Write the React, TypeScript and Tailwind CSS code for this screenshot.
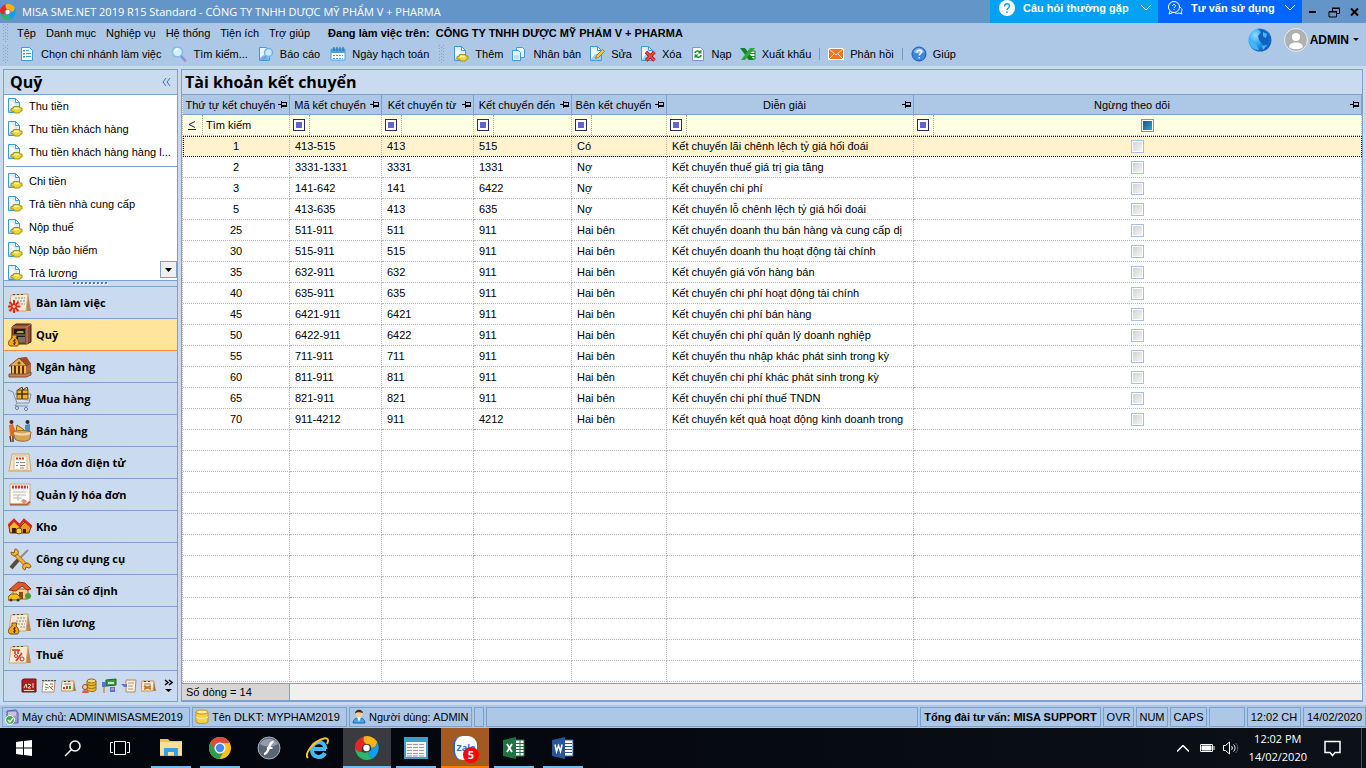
import { FC, ReactNode, useState } from "react"
import { clsx } from "clsx"

// Types
type AccountRow = {
  order: number
  code: string
  from: string
  to: string
  side: string
  note: string
}

const rows: AccountRow[] = [
  { order: 1, code: "413-515", from: "413", to: "515", side: "Có", note: "Kết chuyển lãi chênh lệch tỷ giá hối đoái" },
  { order: 2, code: "3331-1331", from: "3331", to: "1331", side: "Nợ", note: "Kết chuyển thuế giá trị gia tăng" },
  { order: 3, code: "141-642", from: "141", to: "6422", side: "Nợ", note: "Kết chuyển chi phí" },
  { order: 5, code: "413-635", from: "413", to: "635", side: "Nợ", note: "Kết chuyển lỗ chênh lệch tỷ giá hối đoái" },
  { order: 25, code: "511-911", from: "511", to: "911", side: "Hai bên", note: "Kết chuyển doanh thu bán hàng và cung cấp dị" },
  { order: 30, code: "515-911", from: "515", to: "911", side: "Hai bên", note: "Kết chuyển doanh thu hoạt động tài chính" },
  { order: 35, code: "632-911", from: "632", to: "911", side: "Hai bên", note: "Kết chuyển giá vốn hàng bán" },
  { order: 40, code: "635-911", from: "635", to: "911", side: "Hai bên", note: "Kết chuyển chi phí hoạt động tài chính" },
  { order: 45, code: "6421-911", from: "6421", to: "911", side: "Hai bên", note: "Kết chuyển chi phí bán hàng" },
  { order: 50, code: "6422-911", from: "6422", to: "911", side: "Hai bên", note: "Kết chuyển chi phí quản lý doanh nghiệp" },
  { order: 55, code: "711-911", from: "711", to: "911", side: "Hai bên", note: "Kết chuyển thu nhập khác phát sinh trong kỳ" },
  { order: 60, code: "811-911", from: "811", to: "911", side: "Hai bên", note: "Kết chuyển chi phí khác phát sinh trong kỳ" },
  { order: 65, code: "821-911", from: "821", to: "911", side: "Hai bên", note: "Kết chuyển chi phí thuế TNDN" },
  { order: 70, code: "911-4212", from: "911", to: "4212", side: "Hai bên", note: "Kết chuyển kết quả hoạt động kinh doanh trong" },
]

const columns = ["Thứ tự kết chuyển", "Mã kết chuyển", "Kết chuyển từ", "Kết chuyển đến", "Bên kết chuyển", "Diễn giải", "Ngừng theo dõi"]

const menus = ["Tệp", "Danh mục", "Nghiệp vụ", "Hệ thống", "Tiện ích", "Trợ giúp"]

// Small toolbar icons, all on a 16px grid
const Svg16: FC<{ children: ReactNode }> = ({ children }) => (
  <svg viewBox="0 0 16 16" className="h-4 w-4 shrink-0" fill="none">{children}</svg>
)

const Page: FC = () => (
  <>
    <path d="M1.5 .5h7l4 4v10h-11z" fill="#d9edfb" stroke="#3c9bdc" />
    <path d="M4 3l3 2 1 4-4 4H2.500V3z" fill="#fff" />
    <path d="M2 13l4-5h6v6H2z" fill="#9dd0f3" />
    <path d="M8.500 .5v4h4z" fill="#fff" stroke="#3c9bdc" strokeLinejoin="round" />
  </>
)

const DocCoinIcon: FC = () => (
  <Svg16>
    <Page />
    <path d="M7 8.500h5l1 1.500h2v3h-1.500l-1 2h-5l-1-2H4v-2.500h2z" fill="#ecd733" stroke="#a79416" />
    <path d="M7 10.500h5" stroke="#fbf6a6" strokeWidth="1.500" />
  </Svg16>
)

const BranchIcon: FC = () => (
  <Svg16>
    <path d="M2.500 1.500h8l3 3v10h-11z" fill="#f4faff" stroke="#3c9bdc" />
    <path d="M4 4h2v1.500H4zM4 7h2v1.500H4zM4 10h2v1.500H4zM7 4h3v1H7zM7 7h5v1H7zM7 10h5v1H7z" fill="#3c9bdc" />
  </Svg16>
)

const SearchIcon: FC = () => (
  <Svg16>
    <path d="M10 10l4 4.500" stroke="#8f8fd0" strokeWidth="2.500" strokeLinecap="round" />
    <circle cx="6.500" cy="6" r="5" fill="#d3f1fd" stroke="#78bfe9" strokeWidth="1.500" />
    <path d="M3.500 5.500c.5-2 2-2.500 3.500-2.500" stroke="#fff" strokeWidth="1.500" />
  </Svg16>
)

const ReportIcon: FC = () => (
  <Svg16>
    <path d="M1.500 1.500h7l3 3v10h-10z" fill="#e9f5fd" stroke="#3c9bdc" />
    <path d="M2 12l4-3 5 3v2H2z" fill="#6bb9ee" />
    <path d="M8 10l-3 4" stroke="#8f8fd0" strokeWidth="2" />
    <circle cx="10.500" cy="6.500" r="4" fill="#c8e8fa" stroke="#78aedd" strokeWidth="1.500" />
  </Svg16>
)

const CalendarIcon: FC = () => (
  <Svg16>
    <path d="M1 3h14v11H1z" fill="#fff" stroke="#4aa3df" />
    <path d="M1 3h14v4H1z" fill="#4aa3df" />
    <path d="M4 1v4M7 1v4M10 1v4M13 1v4" stroke="#265f94" />
    <path d="M3 9.500h10M3 12.500h10" stroke="#4aa3df" strokeDasharray="2 1" />
  </Svg16>
)

const CopyIcon: FC = () => (
  <Svg16>
    <path d="M5.500 1.500h6l2 2v8h-8z" fill="#e9f5fd" stroke="#3c9bdc" />
    <path d="M1.500 4.500h6l2 2v8h-8z" fill="#e9f5fd" stroke="#3c9bdc" />
    <path d="M3 9h5v4H3z" fill="#bfe0f7" />
  </Svg16>
)

const EditIcon: FC = () => (
  <Svg16>
    <Page />
    <path d="M6.500 12.500l1-3 6-6 2 2-6 6z" fill="#f7c53a" stroke="#a87b1c" />
  </Svg16>
)

const DeleteIcon: FC = () => (
  <Svg16>
    <Page />
    <path d="M6 6l8.500 8.500M14.500 6L6 14.500" stroke="#a51414" strokeWidth="3.500" />
    <path d="M6 6l8.500 8.500M14.500 6L6 14.500" stroke="#e84a41" strokeWidth="2" />
  </Svg16>
)

const ReloadIcon: FC = () => (
  <Svg16>
    <path d="M2.500 1.500h8l3 3v10h-11z" fill="#fff" stroke="#7d93c9" />
    <path d="M5 7c0-2 4-3 5-1M11 9c0 2.500-4 3-5 1" stroke="#17912b" strokeWidth="1.500" />
    <path d="M11.500 3.500v4h-4zM4.500 12.500v-4h4z" fill="#17912b" />
  </Svg16>
)

const ExcelIcon: FC = () => (
  <Svg16>
    <path d="M8 5h7v8H8z" fill="#e6f5e6" stroke="#1c8a2c" />
    <path d="M9 7.500h6M9 10.500h6" stroke="#1c8a2c" />
    <path d="M0 2h5l9 12h-5z" fill="#128023" />
    <path d="M15 2h-5L1 14h4z" fill="#2fa63f" />
  </Svg16>
)

const MailIcon: FC = () => (
  <Svg16>
    <path d="M.5 2.500h15v11H.5z" fill="#f5761d" stroke="#fff" />
    <path d="M1 3l7 6 7-6M1 13l5-5M15 13l-5-5" stroke="#ffe2c8" />
  </Svg16>
)

const HelpIcon: FC = () => (
  <Svg16>
    <circle cx="8" cy="8" r="7" fill="#3d87dc" stroke="#1c5cad" />
    <path d="M3 6c1-5 9-5 10 0-3 2-7 2-10 0z" fill="#8dc0f3" />
    <path d="M6 6.500c0-3 4.500-3 4.500-.5 0 1.500-2.200 1.500-2.200 3.500M8.200 11v1.500" stroke="#fff" strokeWidth="1.500" />
  </Svg16>
)

const PinwheelIcon: FC<{ className?: string }> = ({ className }) => (
  <svg viewBox="0 0 24 24" className={className}>
    <path d="M3 4A12 12 0 0 1 9 .5C8 3 8 6 11 8c-4 1-5 4-4 8-4 0-7-2-7-6 0-2 1-4 3-6z" fill="#e8242a" />
    <path d="M9 .5A12 12 0 0 1 22 5.500c0 5-3 7-6 6 0-3-2-4-5-3.500C8 6 8 3 9 .5z" fill="#fbb315" />
    <path d="M22 5.500c3 5 2 13-4 17-4-1-5-4-4-7 2-1 3-2 2-4 3 1 6-1 6-6z" fill="#0e9ff0" />
    <path d="M0 11c1 4 4 5 7 5 2 1 5 1 7-.5-1 3 0 6 4 7C9 27 0 21 0 11z" fill="#2cb56b" />
    <circle cx="11.500" cy="12" r="3.200" fill="#fff" />
  </svg>
)

const PinIcon: FC = () => (
  <svg viewBox="0 0 10 9" className="h-[9px] w-[10px] shrink-0" fill="none" stroke="#000" shapeRendering="crispEdges">
    <path d="M0 4.500h4M3.500 1v7M4 2.500h5M8.500 2v5" />
    <path d="M4 6h5" strokeWidth="2" />
  </svg>
)

// Sidebar module icons
const Svg24: FC<{ children: ReactNode }> = ({ children }) => (
  <svg viewBox="0 0 24 24" className="h-6 w-6 shrink-0" fill="none">{children}</svg>
)

const Board: FC = () => (
  <>
    <path d="M20 3l3 17h-5z" fill="#b8864f" />
    <path d="M3 4l17-1-2 17H1z" fill="#f6ead2" stroke="#c9a778" />
    <path d="M5 3.500h2M9 3.500h2M13 3.500h2" stroke="#5b4630" />
  </>
)

const MoneyBag: FC = () => (
  <>
    <path d="M4 12h5l-1 3c3 2 4 8 1 8H3c-4 0-3-6 1-8z" fill="#f0a91c" stroke="#7a4a08" />
    <path d="M8 17c-3-1-3 2-1.500 2 2 0 1 3-1.500 1.500M6.500 16v6" stroke="#5e3600" />
  </>
)

const DeskIcon: FC = () => (
  <Svg24>
    <Board />
    <path d="M7 7h10M9 10h8M10 13h7" stroke="#8a8a8a" strokeDasharray="2 1" />
    <path d="M6 9v13M-.5 15.500h13M1.500 11l9 9M10.500 11l-9 9" stroke="#dd2a1a" strokeWidth="2" />
    <circle cx="6" cy="15.500" r="2" fill="#ffd6a8" stroke="#dd2a1a" />
  </Svg24>
)

const SafeIcon: FC = () => (
  <Svg24>
    <path d="M4 4l4-3h15v18l-4 2H4z" fill="#8c4a32" stroke="#4b2316" />
    <path d="M19 4v17M4 4h15l4-3" stroke="#c98769" />
    <path d="M6 6h11v13H6z" fill="#1f1b18" />
    <path d="M6 12h11" stroke="#9b958c" />
    <path d="M10 14h7v5h-7z" fill="#77726b" />
    <path d="M8 10l2-2h5l1 2z" fill="#b7a72b" />
    <MoneyBag />
  </Svg24>
)

const BankIcon: FC = () => (
  <Svg24>
    <path d="M12 3l7-1 4 7v9l-7 2z" fill="#b46843" />
    <path d="M1 11L11 3l8 8z" fill="#e5b046" stroke="#7d3f1b" />
    <path d="M11 3l7-1 5 7-4 2z" fill="#a3492a" />
    <path d="M3 11h15v8H3z" fill="#5a3113" />
    <path d="M5 11v8M9 11v8M13 11v8M17 11v8" stroke="#f2ba4c" strokeWidth="2" />
    <path d="M1 19h17l5-2v3l-5 2H1z" fill="#c48655" stroke="#7d4d28" />
    <circle cx="11" cy="8" r="1.500" fill="#7d3f1b" />
  </Svg24>
)

const CartIcon: FC = () => (
  <Svg24>
    <path d="M0 3l5 2 4 11h12l2-9H7" fill="#dbe4ef" stroke="#7b8fa9" />
    <path d="M9 3h11v9H9z" fill="#f0b31d" stroke="#6e4a06" />
    <path d="M14 3v9M9 7h11" stroke="#4a2f08" strokeWidth="1.500" />
    <path d="M10 3l4-3 1 3 4-3 1 3" stroke="#4a2f08" />
    <path d="M8 12l13 1M9 16l-2 3h13" stroke="#7b8fa9" />
    <circle cx="9" cy="21" r="1.500" fill="#fff" stroke="#60738c" />
    <circle cx="18" cy="22" r="1.500" fill="#fff" stroke="#60738c" />
  </Svg24>
)

const ShopIcon: FC = () => (
  <Svg24>
    <path d="M1 6l4-1 2 6-1 6H2z" fill="#e86a1f" />
    <path d="M2 17l1 6M5 17v6" stroke="#5e3a24" strokeWidth="1.500" />
    <circle cx="3.500" cy="3" r="2" fill="#4a241a" />
    <path d="M17 6l5-1v8h-5z" fill="#4f8fb6" />
    <circle cx="19.500" cy="3" r="2" fill="#332420" />
    <path d="M9 6l6 4 3 3H8z" fill="#f2c522" stroke="#8a630f" />
    <path d="M5 13c4-2 13-2 18 0l-1 7c-3 3-12 3-15 0z" fill="#d7a45c" stroke="#946a34" />
    <path d="M6 14c4 2 12 2 16 0" stroke="#f6dba9" strokeWidth="2" />
  </Svg24>
)

const EInvoiceIcon: FC = () => (
  <Svg24>
    <path d="M4 3h17l2 17H1z" fill="#f5e3c3" stroke="#c9a778" />
    <path d="M6 5h13v14H6z" fill="#fffdf8" stroke="#d8b88a" />
    <path d="M8 7.500h9" stroke="#e03322" strokeWidth="2" strokeDasharray="2 1" />
    <path d="M8 11.500h3M12 11.500h5M8 14.500h2M12 14.500h5M12 17h4" stroke="#8a8a8a" />
    <path d="M0 20h24" stroke="#dcb986" strokeWidth="2" />
  </Svg24>
)

const InvoiceIcon: FC = () => (
  <Svg24>
    <path d="M2 1h20v21H2z" fill="#fffdf8" stroke="#c9a778" />
    <path d="M4 4h16" stroke="#e02a22" strokeWidth="3" strokeDasharray="2 1" />
    <path d="M5 9h13M5 12h13M5 15h9M10 12v6" stroke="#b9b9b9" />
    <path d="M13 18l2-2 3 1 1 2-3 2z" fill="#e88a84" />
    <path d="M2 21.500h17l3-3" stroke="#a66b38" strokeWidth="2" />
  </Svg24>
)

const WarehouseIcon: FC = () => (
  <Svg24>
    <path d="M1 12l5-6 6 5v7H2z" fill="#f2b530" stroke="#6b3608" />
    <path d="M12 12l5-5 6 5-2 6h-9z" fill="#e79b1c" stroke="#6b3608" />
    <path d="M0 11l6-6 7 7M11 11l5-6 8 7" stroke="#d02a1a" strokeWidth="2.500" />
    <path d="M4 18v-5h4v5M15 18v-4h3v4" fill="#3f2006" />
    <circle cx="11" cy="16" r="3" fill="#f8cf46" stroke="#7a4a08" />
  </Svg24>
)

const ToolsIcon: FC = () => (
  <Svg24>
    <path d="M20 3L6 17" stroke="#8d8d8d" strokeWidth="2" />
    <path d="M10 13l-7 8" stroke="#5b4a35" strokeWidth="4" />
    <path d="M7 7l12 12" stroke="#b06c12" strokeWidth="4" />
    <path d="M7 7l12 12" stroke="#f3b13a" strokeWidth="2.500" />
    <path d="M3 5l3 1 1-4c3 0 4 3 3 5L7 9C5 9 3 8 3 5zM21 21l-3-1-1 3c-3-1-3-4-1-6l3-1c2 0 4 2 4 4z" fill="#f3b13a" stroke="#8c5a16" />
  </Svg24>
)

const AssetIcon: FC = () => (
  <Svg24>
    <path d="M5 10h15v10H5z" fill="#f6cd86" stroke="#a85c21" />
    <path d="M1 11l9-8 7 1 6 6-4 1-5-4-6 5z" fill="#e25a2a" stroke="#963114" />
    <path d="M11 13h4v7h-4z" fill="#8a4a1d" />
    <path d="M0 18l3-3h6l3 3v3H0z" fill="#f2c112" stroke="#835c06" />
    <circle cx="3" cy="21" r="1.500" fill="#333" />
    <circle cx="10" cy="21" r="1.500" fill="#333" />
    <circle cx="20" cy="17" r="3" fill="#48a03a" />
  </Svg24>
)

const SalaryIcon: FC = () => (
  <Svg24>
    <Board />
    <path d="M9 7h9M8 10h10M10 13h7M12 16h5" stroke="#8f8f8f" strokeDasharray="2 1" />
    <MoneyBag />
  </Svg24>
)

const TaxIcon: FC = () => (
  <Svg24>
    <Board />
    <path d="M4 7h8M7 8v3M10 7v4" stroke="#e02a22" strokeWidth="1.500" />
    <path d="M14 10l-6 8" stroke="#e02a22" strokeWidth="1.500" />
    <circle cx="8" cy="13" r="1.500" stroke="#e02a22" />
    <circle cx="14" cy="16" r="2" stroke="#e02a22" />
  </Svg24>
)

const modules = [
  { name: "Bàn làm việc", icon: <DeskIcon /> },
  { name: "Quỹ", icon: <SafeIcon /> },
  { name: "Ngân hàng", icon: <BankIcon /> },
  { name: "Mua hàng", icon: <CartIcon /> },
  { name: "Bán hàng", icon: <ShopIcon /> },
  { name: "Hóa đơn điện tử", icon: <EInvoiceIcon /> },
  { name: "Quản lý hóa đơn", icon: <InvoiceIcon /> },
  { name: "Kho", icon: <WarehouseIcon /> },
  { name: "Công cụ dụng cụ", icon: <ToolsIcon /> },
  { name: "Tài sản cố định", icon: <AssetIcon /> },
  { name: "Tiền lương", icon: <SalaryIcon /> },
  { name: "Thuế", icon: <TaxIcon /> },
]

const receiptTasks = ["Thu tiền", "Thu tiền khách hàng", "Thu tiền khách hàng hàng l..."]
const paymentTasks = ["Chi tiền", "Trả tiền nhà cung cấp", "Nộp thuế", "Nộp bảo hiểm", "Trả lương"]

const MiniBoard: FC = () => (
  <>
    <path d="M13 3l2 10h-3z" fill="#a97642" />
    <path d="M1 3h12l-1 10H0z" fill="#f7ecd6" stroke="#c09763" />
    <path d="M3 3.500h2M7 3.500h2" stroke="#594028" />
  </>
)

const shortcuts = [
  <Svg16 key="ledger">
    <path d="M1 2l2-1h12v13H1z" fill="#b01f20" stroke="#6e0e10" />
    <path d="M3 10l2-4 1 4M7 6l3 1-3 3h3M12 5v5M3 12.500h10" stroke="#f3dcc4" />
  </Svg16>,
  <Svg16 key="tax">
    <path d="M2 3h12l-1 11H1z" fill="#fffaf0" stroke="#a5977f" />
    <path d="M1 2.500h14" stroke="#5a5145" strokeDasharray="2 1" />
    <path d="M4 6l3 1M9 6h3M4 9l4 1M4 12l2-1" stroke="#777" />
    <path d="M8 8l4 4M12 8l-3 2" stroke="#d84a2a" />
  </Svg16>,
  <Svg16 key="budget">
    <MiniBoard />
    <path d="M3 6h7" stroke="#888" />
    <path d="M3 11V9M6 11V8" stroke="#d8432c" strokeWidth="2" />
    <path d="M9 11V8" stroke="#38943b" strokeWidth="2" />
  </Svg16>,
  <Svg16 key="coins">
    <path d="M6 3v9c2 2 8 2 9 0V3z" fill="#f3b92c" stroke="#94690e" />
    <ellipse cx="10.500" cy="3" rx="4.500" ry="2" fill="#fbdc6a" stroke="#94690e" />
    <path d="M6 6c2 2 7 2 9 0M6 9c2 2 7 2 9 0" stroke="#94690e" />
    <circle cx="4" cy="9" r="2.500" fill="#f2c9a2" stroke="#85502a" />
    <path d="M1 15c0-4 6-4 7 0z" fill="#d75d4b" />
  </Svg16>,
  <Svg16 key="cash">
    <path d="M5 2l10-1v6L5 8z" fill="#3a9a42" stroke="#1d6425" />
    <path d="M7 4h6v2H7z" fill="#d2efc9" />
    <path d="M9 9h5v5H9zM1 4h4v5H1z" fill="#5573cf" />
    <path d="M3 9v6M10 11h3" stroke="#c7a27a" strokeWidth="2" />
  </Svg16>,
  <Svg16 key="contract">
    <path d="M5 2h10l-1 12H5z" fill="#f9efdc" stroke="#b58a57" />
    <path d="M7 5h6M7 8h5M7 11h5" stroke="#9c9c9c" />
    <path d="M0 6h6v3H3z" fill="#6479b9" />
  </Svg16>,
  <Svg16 key="tools">
    <MiniBoard />
    <path d="M3 6h7" stroke="#888" />
    <path d="M3 8l7 3M10 8l-7 3" stroke="#cc7a22" strokeWidth="2" />
  </Svg16>,
]

const Grip: FC = () => (
  <svg viewBox="0 0 6 18" className="h-[18px] w-[6px] shrink-0" fill="#8f9fb5">
    {[0, 3, 6, 9, 12, 15].map((y) => (
      <g key={y}>
        <rect x="0" y={y} width="1" height="1" />
        <rect x="4" y={y} width="1" height="1" />
        <rect x="2" y={y + 2} width="1" height="1" />
      </g>
    ))}
  </svg>
)

const ToolButton: FC<{ icon: ReactNode; children: ReactNode }> = ({ icon, children }) => (
  <button className="flex items-center gap-[6px] whitespace-nowrap">
    {icon}
    {children}
  </button>
)

const StatusCell: FC<{ className?: string; children?: ReactNode }> = ({ className, children }) => (
  <div className={clsx("flex h-5 items-center whitespace-nowrap border border-[#7ba2ce] bg-[#adc7e7]", className)}>
    {children}
  </div>
)

const TaskButton: FC<{ label: string; className?: string; line?: string; children: ReactNode }> = ({ label, className, line, children }) => (
  <button aria-label={label} className={clsx("relative flex h-10 w-12 items-center justify-center", className)}>
    {children}
    {line && <span className={clsx("absolute bottom-0 h-[2px]", line)} />}
  </button>
)

const TitleBar: FC = () => (
  <header className="flex h-[23px] shrink-0 items-center overflow-hidden bg-[#6495c8] text-white">
    <PinwheelIcon className="h-4 w-4 shrink-0" />
    <h1 className="ml-[6px] flex-1 truncate font-['Open_Sans','Noto_Sans',sans-serif] text-[11px]">
      MISA SME.NET 2019 R15 Standard - CÔNG TY TNHH DƯỢC MỸ PHẨM V + PHARMA
    </h1>
    <button className="flex h-full w-[168px] items-center bg-[#00a2f3] pb-2 pl-[9px] font-bold">
      <svg viewBox="0 0 16 16" className="h-4 w-4" fill="none">
        <circle cx="8" cy="8" r="8" fill="#fff" />
        <path d="M5.500 6.500c0-3.500 5-3.500 5-.5 0 2-2.500 2-2.500 4M8 11.500v1.500" stroke="#00a2f3" strokeWidth="1.500" />
      </svg>
      <span className="ml-2 flex-1 text-left">Câu hỏi thường gặp</span>
      <svg viewBox="0 0 10 6" className="mr-[7px] h-[6px] w-[10px]" fill="none" stroke="#fff"><path d="M0 0l5 5 5-5" /></svg>
    </button>
    <button className="flex h-full w-[144px] items-center bg-[#0066ff] pb-2 pl-[9px] font-bold">
      <svg viewBox="0 0 16 16" className="h-4 w-4" fill="none" stroke="#fff">
        <circle cx="7" cy="7" r="5.500" />
        <path d="M3 11l-1 3 4-1.500M13 7c3 2 2 4 1 5l1 2-3-1c-2 1-3 0-4 0" />
        <path d="M5.500 6c0-2 3-2 3 0 0 1-1.500 1-1.500 2M7 9v1" />
      </svg>
      <span className="ml-2 flex-1 text-left">Tư vấn sử dụng</span>
      <svg viewBox="0 0 10 6" className="mr-[7px] h-[6px] w-[10px]" fill="none" stroke="#fff"><path d="M0 0l5 5 5-5" /></svg>
    </button>
    <div className="flex w-16 items-center justify-around text-black">
      <button aria-label="Thu nhỏ">
        <svg viewBox="0 0 12 12" className="h-3 w-3"><path d="M2 5h7v2H2z" /></svg>
      </button>
      <button aria-label="Khôi phục">
        <svg viewBox="0 0 12 12" className="h-3 w-3" fill="none" stroke="#000">
          <path d="M4.500 5V2.500h7v5H9M4 2h8" /><path d="M1 5.500h7.500V11h-7.500zM1 6h8" />
        </svg>
      </button>
      <button aria-label="Đóng">
        <svg viewBox="0 0 12 12" className="h-3 w-3" fill="none" stroke="#000" strokeWidth="2"><path d="M2 2.500l7 7M9 2.500l-7 7" /></svg>
      </button>
    </div>
  </header>
)

const Toolbar: FC = () => (
  <div className="flex h-[43px] shrink-0 items-center bg-[#adc7e7]">
    <div className="flex-1 pb-[2px]">
      <nav className="flex h-5 items-center gap-2 whitespace-nowrap pl-[3px]">
        <Grip />
        <div className="flex gap-[10px]">
          {menus.map((menu) => <button key={menu}>{menu}</button>)}
          <span className="ml-2 font-bold">Đang làm việc trên:&nbsp; CÔNG TY TNHH DƯỢC MỸ PHẨM V + PHARMA</span>
        </div>
      </nav>
      <div className="flex h-[21px] items-center gap-2 pl-[3px]">
        <div className="flex items-center gap-[10px]">
          <Grip />
          <ToolButton icon={<BranchIcon />}>Chọn chi nhánh làm việc</ToolButton>
          <ToolButton icon={<SearchIcon />}>Tìm kiếm...</ToolButton>
          <ToolButton icon={<ReportIcon />}>Báo cáo</ToolButton>
          <ToolButton icon={<CalendarIcon />}>Ngày hạch toán</ToolButton>
          <Grip />
        </div>
        <ToolButton icon={<DocCoinIcon />}>Thêm</ToolButton>
        <ToolButton icon={<CopyIcon />}>Nhân bản</ToolButton>
        <ToolButton icon={<EditIcon />}>Sửa</ToolButton>
        <ToolButton icon={<DeleteIcon />}>Xóa</ToolButton>
        <ToolButton icon={<ReloadIcon />}>Nạp</ToolButton>
        <ToolButton icon={<ExcelIcon />}>Xuất khẩu</ToolButton>
        <span className="h-3 w-px bg-[#6f9ccf]" />
        <ToolButton icon={<MailIcon />}>Phản hồi</ToolButton>
        <span className="h-3 w-px bg-[#6f9ccf]" />
        <ToolButton icon={<HelpIcon />}>Giúp</ToolButton>
      </div>
    </div>
    <div className="flex items-center pb-[10px] pr-[7px]">
      <button aria-label="Trang web">
        <svg viewBox="0 0 24 24" className="h-6 w-6">
          <defs>
            <radialGradient id="globe" cx="0.300" cy="0.300" r="0.800">
              <stop offset="0" stopColor="#8fdcff" />
              <stop offset="0.500" stopColor="#279df2" />
              <stop offset="1" stopColor="#0a55b0" />
            </radialGradient>
          </defs>
          <circle cx="12" cy="12" r="11.500" fill="url(#globe)" />
          <path d="M10 1c5-1 10 3 12 8l-2 7-4 2-5-6-1-4 3-4z" fill="#0f62bd" />
          <path d="M1 12c2-1 5 1 7 4l3 6C5 22 1 18 1 12z" fill="#3fb8fa" />
          <path d="M15 4l4 2-1 4-3-2zM14 18l5-1-4 5z" fill="#49b9fb" />
        </svg>
      </button>
      <button className="ml-3 flex items-center text-[12px] font-bold">
        <svg viewBox="0 0 24 24" className="mr-[2px] h-6 w-6">
          <circle cx="12" cy="12" r="11.500" fill="#b1b1b1" stroke="#e8eef6" />
          <circle cx="12" cy="9" r="4" fill="#fff" />
          <path d="M5 19c0-6 14-6 14 0-3 3-11 3-14 0z" fill="#fff" />
        </svg>
        ADMIN
        <svg viewBox="0 0 6 4" className="ml-1 h-1 w-[6px]"><path d="M0 0h6L3 3z" /></svg>
      </button>
    </div>
  </div>
)

const TaskLink: FC<{ name: string }> = ({ name }) => (
  <a href="#" className="flex h-[23px] items-center gap-[6px] pb-[2px] pl-[3px]">
    <DocCoinIcon />
    <span className="whitespace-nowrap">{name}</span>
  </a>
)

const Sidebar: FC = () => {
  const [active, setActive] = useState("Quỹ")

  return (
    <aside className="flex w-[175px] shrink-0 flex-col border border-[#7ba2ce]">
      <div className="flex h-[25px] shrink-0 items-center justify-between border-b border-[#7ba2ce] pl-[6px] pr-[6px]">
        <h2 className="font-['Open_Sans','Noto_Sans',sans-serif] text-[16px] font-bold">Quỹ</h2>
        <button aria-label="Thu gọn">
          <svg viewBox="0 0 9 8" className="h-2 w-[9px]" fill="none" stroke="#3b6fae"><path d="M4 0L1 4l3 4M8 0L5 4l3 4" /></svg>
        </button>
      </div>

      {/* Task list */}
      <div className="relative min-h-0 flex-1 overflow-hidden bg-white">
        {receiptTasks.map((task) => <TaskLink key={task} name={task} />)}
        <hr className="mb-[3px] ml-[2px] mt-[2px] border-[#7ba2ce]" />
        {paymentTasks.map((task) => <TaskLink key={task} name={task} />)}
        <button aria-label="Cuộn xuống" className="absolute bottom-[2px] right-0 flex h-[17px] w-[17px] items-center justify-center border border-[#7ba2ce] bg-[#f0f0f0]">
          <svg viewBox="0 0 8 4" className="h-1 w-2"><path d="M0 0h7L3.500 4z" /></svg>
        </button>
      </div>

      <div className="flex h-[7px] shrink-0 items-center justify-center border-y border-[#7ba2ce]">
        <svg viewBox="0 0 36 3" className="h-[3px] w-9" shapeRendering="crispEdges">
          <path d="M1 2h36" stroke="#fff" strokeWidth="2" strokeDasharray="2 2" />
          <path d="M0 1h36" stroke="#4d7ebd" strokeWidth="2" strokeDasharray="2 2" />
        </svg>
      </div>

      {/* Modules */}
      {modules.map((item) => (
        <button
          key={item.name}
          onClick={() => setActive(item.name)}
          className={clsx(
            "flex h-8 shrink-0 items-center gap-1 border-b pl-1 font-['Open_Sans','Noto_Sans',sans-serif] text-[11px] font-bold",
            active === item.name ? "border-[#f98d3c] bg-[#ffe49c]" : "border-[#7ba2ce]"
          )}
        >
          {item.icon}
          {item.name}
        </button>
      ))}

      <div className="flex h-[30px] shrink-0 items-center justify-end gap-1 pr-1">
        {shortcuts}
        <button aria-label="Thêm phân hệ" className="ml-[3px]">
          <svg viewBox="0 0 9 14" className="h-[14px] w-[9px]" fill="none" stroke="#000" strokeWidth="1.500">
            <path d="M1 1l3 2.500L1 6M5 1l3 2.500L5 6" /><path d="M1 10h7l-3.500 3z" fill="#000" stroke="none" />
          </svg>
        </button>
      </div>
    </aside>
  )
}

const FilterCell: FC<{ label: string; index: number }> = ({ label, index }) => (
  <div className="flex h-5 items-center">
    <button aria-label={`Điều kiện ${label}`} className="flex h-full w-5 shrink-0 items-center border-r border-dotted border-[#a0a0a0] pl-[3px]">
      {index === 0 ? (
        <svg viewBox="0 0 8 9" className="ml-[2px] h-[9px] w-2" fill="none" stroke="#1f1f5c"><path d="M7 .5L1 3.500l6 3M0 8.500h8" /></svg>
      ) : (
        <span className="flex h-3 w-3 items-center justify-center border border-[#2b2b66] bg-white">
          <span className="h-[6px] w-[6px] bg-[#6464d0]" />
        </span>
      )}
    </button>
    {index === columns.length - 1 ? (
      <span className="flex flex-1 justify-center">
        <input
          type="checkbox"
          aria-label={label}
          className="h-[13px] w-[13px] appearance-none border border-[#8f8f8f] bg-linear-to-br from-[#14527c] to-[#3fa9d3] shadow-[inset_0_0_0_1px_#fff]"
        />
      </span>
    ) : (
      <input
        aria-label={label}
        defaultValue={index === 0 ? "Tìm kiếm" : ""}
        className="w-0 min-w-0 flex-1 bg-transparent pl-[3px] outline-none"
      />
    )}
  </div>
)

const AccountTable: FC = () => {
  const [selected, setSelected] = useState(1)
  const cell = "h-[21px] border-b border-r border-dotted border-[#b8b8b8] p-0"

  return (
    <table className="w-full table-fixed border-separate border-spacing-0">
      <colgroup>
        <col className="w-[107px]" />
        <col className="w-[92px]" />
        <col className="w-[92px]" />
        <col className="w-[98px]" />
        <col className="w-[95px]" />
        <col className="w-[247px]" />
        <col />
      </colgroup>
      <thead>
        <tr className="bg-[#adc7e7]">
          {columns.map((column) => (
            <th key={column} className="h-5 border-b border-r border-[#7ba2ce] p-0 font-normal">
              <div className="flex items-center pr-px">
                <span className="flex-1 whitespace-nowrap text-center">{column}</span>
                <PinIcon />
              </div>
            </th>
          ))}
        </tr>
        <tr className="bg-[#ffffe1]">
          {columns.map((column, index) => (
            <td key={column} className={cell}>
              <FilterCell label={column} index={index} />
            </td>
          ))}
        </tr>
      </thead>
      <tbody>
        {rows.map((row) => (
          <tr
            key={row.code}
            onClick={() => setSelected(row.order)}
            className={clsx(selected === row.order && "bg-[#fff2cc] outline-1 -outline-offset-1 outline-dotted outline-black")}
          >
            <td className={clsx(cell, "text-center")}>{row.order}</td>
            <td className={clsx(cell, "pl-[5px]")}>{row.code}</td>
            <td className={clsx(cell, "pl-[5px]")}>{row.from}</td>
            <td className={clsx(cell, "pl-[5px]")}>{row.to}</td>
            <td className={clsx(cell, "pl-[5px]")}>{row.side}</td>
            <td className={clsx(cell, "overflow-hidden whitespace-nowrap pl-[5px]")}>{row.note}</td>
            <td className={cell}>
              <div className="flex justify-center">
                <input
                  type="checkbox"
                  aria-label={`Ngừng theo dõi ${row.code}`}
                  className="h-[13px] w-[13px] appearance-none border border-[#a9bfdf] bg-linear-to-br from-[#cfcfcf] to-[#f8f8f8] shadow-[inset_0_0_0_1px_#fff]"
                />
              </div>
            </td>
          </tr>
        ))}
        {/* Empty grid lines under the data */}
        {Array.from({ length: 12 }, (_, i) => (
          <tr key={i}>
            {columns.map((column) => <td key={column} className={cell} />)}
          </tr>
        ))}
      </tbody>
    </table>
  )
}

const StatusBar: FC = () => (
  <footer className="flex h-[23px] shrink-0 items-center gap-[2px] bg-[#adc7e7] pl-[2px]">
    <StatusCell className="w-[188px] gap-[2px] pl-px">
      <Svg16>
        <path d="M3 2l9-1 2 3v10H3z" fill="#9d9bd0" stroke="#5c5a9d" />
        <path d="M4 4h8M4 6h8" stroke="#e9e9fb" />
        <circle cx="6" cy="11" r="4.500" fill="#43b04a" stroke="#fff" />
        <path d="M4 11l2 2 3-4" stroke="#fff" strokeWidth="1.500" />
      </Svg16>
      Máy chủ: ADMIN\MISASME2019
    </StatusCell>
    <StatusCell className="w-[155px] gap-[2px] pl-px">
      <Svg16>
        <path d="M2 3v10c2 2 10 2 12 0V3z" fill="#f8cf47" stroke="#c79112" />
        <ellipse cx="8" cy="3" rx="6" ry="2" fill="#fdeba0" stroke="#c79112" />
        <path d="M2 8c3 2 9 2 12 0" stroke="#fff4c0" />
      </Svg16>
      Tên DLKT: MYPHAM2019
    </StatusCell>
    <StatusCell className="w-[123px] gap-[2px] pl-px">
      <Svg16>
        <path d="M2 14c0-7 12-7 12 0z" fill="#4ba4e6" stroke="#2269ae" />
        <path d="M6 8l2 5 2-5z" fill="#fff" />
        <circle cx="8" cy="5" r="3.500" fill="#f5cf9b" />
        <path d="M4 5c0-6 8-5 8-1-3 0-5-2-8 1z" fill="#3f2a18" />
      </Svg16>
      Người dùng: ADMIN
    </StatusCell>
    <StatusCell className="w-[10px]" />
    <StatusCell className="flex-1" />
    <StatusCell className="w-[181px] justify-center font-bold">Tổng đài tư vấn: MISA SUPPORT</StatusCell>
    <StatusCell className="w-[31px] justify-center">OVR</StatusCell>
    <StatusCell className="w-[32px] justify-center">NUM</StatusCell>
    <StatusCell className="w-[37px] justify-center">CAPS</StatusCell>
    <StatusCell className="w-9" />
    <StatusCell className="w-[54px] justify-center">12:02 CH</StatusCell>
    <StatusCell className="w-[63px] justify-center">14/02/2020</StatusCell>
  </footer>
)

const Taskbar: FC = () => (
  <div className="flex h-10 shrink-0 items-center bg-linear-to-r from-[#02050b] via-[#060a10] to-[#0b1118] text-white">
    <TaskButton label="Start">
      <svg viewBox="0 0 16 16" className="h-4 w-4" fill="#fff"><path d="M0 2l7-1v6.500H0zM8 1l8-1v7.500H8zM0 8.500h7V15l-7-1zM8 8.500h8V16l-8-1z" /></svg>
    </TaskButton>
    <TaskButton label="Search">
      <svg viewBox="0 0 17 17" className="h-[17px] w-[17px]" fill="none" stroke="#fff" strokeWidth="1.500"><circle cx="11" cy="6" r="5" /><path d="M7.500 9.500L1 16" /></svg>
    </TaskButton>
    <TaskButton label="Task View">
      <svg viewBox="0 0 20 16" className="h-4 w-5" fill="none" stroke="#fff"><path d="M4.500 1.500h11v13h-11zM3 2.500H.5v10H3M17 2.500h2.500v10H17" /></svg>
    </TaskButton>
    <div className="ml-[3px] flex gap-px">
      <TaskButton label="File Explorer" line="inset-x-1 bg-[#76b9ed]">
        <svg viewBox="0 0 22 20" className="h-5 w-[22px]">
          <path d="M0 1h8l2 2h12v15H0z" fill="#f5c342" />
          <path d="M0 4h22v13H0z" fill="#fde093" />
          <path d="M4 10h14v8h-4v-4H8v4H4z" fill="#34a2e0" />
        </svg>
      </TaskButton>
      <TaskButton label="Chrome" line="inset-x-1 bg-[#76b9ed]">
        <svg viewBox="0 0 24 24" className="h-6 w-6">
          <circle cx="12" cy="12" r="11" fill="#fbc116" />
          <path d="M2.500 6.500a11 11 0 0 1 19 0L22 7H12L7 15z" fill="#de4a3b" />
          <path d="M2.500 6.500L8 15l8 0-4.500 8A11 11 0 0 1 2.500 6.500z" fill="#2a9d4e" />
          <circle cx="12" cy="12" r="5.500" fill="#fff" />
          <circle cx="12" cy="12" r="4.200" fill="#4688f1" />
        </svg>
      </TaskButton>
      <TaskButton label="Flash">
        <svg viewBox="0 0 24 24" className="h-6 w-6" fill="none">
          <circle cx="12" cy="12" r="11" fill="#5b6475" stroke="#a9b2c2" />
          <path d="M3 8c3-7 15-7 18 0-4 3-12 4-18 0z" fill="#929cae" />
          <path d="M16.500 6c-5-1-4 12-9.500 12" stroke="#fff" strokeWidth="2.500" />
          <path d="M10 12h5.500" stroke="#fff" strokeWidth="2" />
        </svg>
      </TaskButton>
      <TaskButton label="Internet Explorer">
        <svg viewBox="0 0 24 24" className="h-6 w-6" fill="none">
          <path d="M20 13H7.500M19.500 13c0-9-13.500-9-13.500 1 0 8 10 9 13 3" stroke="#45b9f0" strokeWidth="4" />
          <path d="M2 22C-2 18 6 8 14 4c6-3 10-2 7 4" stroke="#f6c22e" strokeWidth="2" />
        </svg>
      </TaskButton>
      <TaskButton label="MISA SME.NET" className="bg-[#3a3b3e]" line="inset-x-0 bg-[#76b9ed]">
        <PinwheelIcon className="h-6 w-6" />
      </TaskButton>
      <TaskButton label="Bảng tính" line="inset-x-1 bg-[#76b9ed]">
        <svg viewBox="0 0 24 22" className="h-[22px] w-6" fill="none">
          <path d="M1 1h22v20H1z" fill="#f4f4f4" stroke="#3ba0cf" strokeWidth="2" />
          <path d="M1 1h22v4H1z" fill="#3ba0cf" />
          <path d="M3 7.500h18M3 10.500h18M3 13.500h18M3 16.500h18M3 19h18" stroke="#9b9b9b" strokeDasharray="5 1" />
        </svg>
      </TaskButton>
      <TaskButton label="Zalo" className="bg-[#a35a22]" line="inset-x-0 bg-[#ff7b00]">
        <span className="relative flex h-6 w-6 items-center justify-center rounded-[9px] border-l-2 border-[#1769e0] bg-white font-['Open_Sans',sans-serif] text-[9px] font-bold text-[#1f74e8]">
          Zalo
          <span className="absolute -bottom-[3px] -right-[2px] flex h-4 w-4 items-center justify-center rounded-full bg-[#fa0606] text-[11px] text-white">5</span>
        </span>
      </TaskButton>
      <TaskButton label="Excel" line="inset-x-1 bg-[#76b9ed]">
        <svg viewBox="0 0 22 22" className="h-[22px] w-[22px]" fill="none">
          <path d="M12 3h9v16h-9z" fill="#fff" stroke="#1f7244" />
          <path d="M12 6.500h9M12 9.500h9M12 12.500h9M12 15.500h9M17 3v16" stroke="#1f7244" />
          <path d="M0 3l13-3v22L0 19z" fill="#1f7244" />
          <path d="M4 7l5 8M9 7l-5 8" stroke="#fff" strokeWidth="1.800" />
        </svg>
      </TaskButton>
      <TaskButton label="Word" line="inset-x-1 bg-[#76b9ed]">
        <svg viewBox="0 0 22 22" className="h-[22px] w-[22px]" fill="none">
          <path d="M12 3h9v16h-9z" fill="#fff" stroke="#2a5699" />
          <path d="M13 6.500h7M13 9.500h7M13 12.500h7M13 15.500h7" stroke="#2a5699" />
          <path d="M0 3l13-3v22L0 19z" fill="#2a5699" />
          <path d="M3 7.500l1.500 7 2-6 2 6L10 7.500" stroke="#fff" strokeWidth="1.500" />
        </svg>
      </TaskButton>
    </div>
    <div className="ml-auto flex h-full items-center">
      <svg viewBox="0 0 12 7" className="h-[7px] w-3" fill="none" stroke="#fff" strokeWidth="1.500"><path d="M0 6.500l6-6 6 6" /></svg>
      <svg viewBox="0 0 15 10" className="ml-[11px] h-[10px] w-[15px]" fill="none" stroke="#fff"><path d="M.5 1.500h12v7H.5zM14 3v4" /><path d="M2 3h9v4H2z" fill="#fff" /></svg>
      <svg viewBox="0 0 16 14" className="ml-2 h-[14px] w-4" fill="none" stroke="#fff">
        <path d="M.5 4.500h2l4-3.500v12l-4-3.500h-2z" /><path d="M8.500 5c1 1 1 3 0 4" /><path d="M10.500 3.500c2 2 2 5 0 7" /><path d="M12.500 2c3 3 3 7 0 10" stroke="#666" />
      </svg>
      <div className="ml-[10px] text-center font-['Open_Sans','Noto_Sans',sans-serif] leading-[18px]">
        <p>12:02 PM</p>
        <p>14/02/2020</p>
      </div>
      <svg viewBox="0 0 17 17" className="ml-[17px] mr-[20px] h-[17px] w-[17px]" fill="none" stroke="#fff"><path d="M1 1.500h15v11h-5l-2.500 3-2.500-3H1z" strokeWidth="1.500" /></svg>
      <span className="mr-1 h-full w-px bg-[#4a4f55]" />
    </div>
  </div>
)

const App: FC = () => {
  return (
    <div className="flex h-screen min-h-[768px] flex-col bg-[#cbdbef] font-['Liberation_Sans',Arial,sans-serif] text-[11px] leading-4 text-black">
      <TitleBar />
      <Toolbar />

      <div className="flex min-h-0 flex-1 gap-[3px] px-[3px] py-[3px]">
        <Sidebar />

        <main className="flex min-w-0 flex-1 flex-col border border-b-2 border-[#7ba2ce]">
          <h2 className="flex h-[25px] shrink-0 items-center border-b border-[#7ba2ce] pl-[3px] font-['Open_Sans','Noto_Sans',sans-serif] text-[16px] font-bold">
            Tài khoản kết chuyển
          </h2>
          <div className="min-h-0 flex-1 overflow-hidden border-l border-dotted border-[#b8b8b8] bg-white">
            <AccountTable />
          </div>
          <div className="flex h-[17px] shrink-0 border-t border-[#7ba2ce] bg-[#f0f0f0]">
            <div className="flex w-[108px] items-center border-r border-[#7ba2ce] bg-[#d6d6d6] pl-1">Số dòng = 14</div>
          </div>
        </main>
      </div>

      <StatusBar />
      <Taskbar />
    </div>
  )
}

export default App
